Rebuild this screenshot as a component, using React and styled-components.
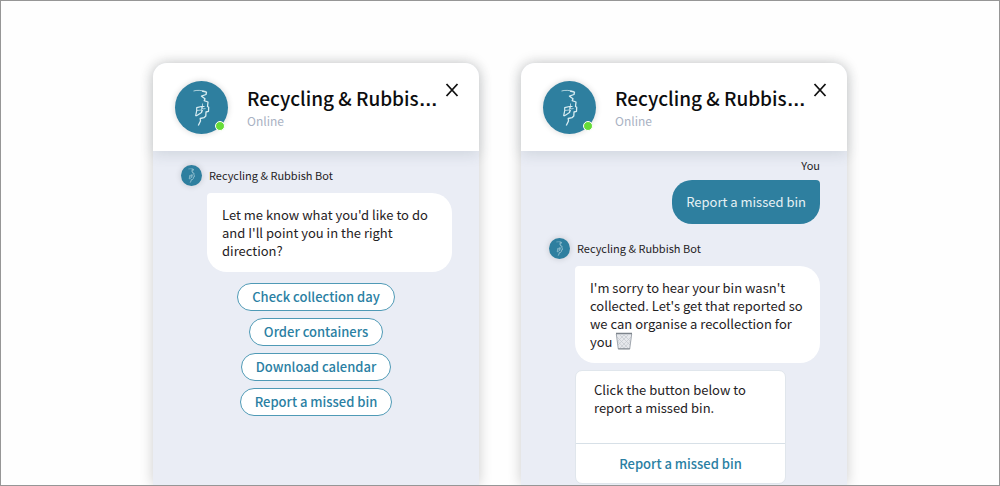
import React from "react";
import styled, { createGlobalStyle } from "styled-components";

const teal = "#2e7f9f";
const link = "#2a80a3";

const GlobalStyle = createGlobalStyle`
  *, *::before, *::after { box-sizing: border-box; }
  body {
    margin: 0;
    background: #fefefe;
    color: #1f2224;
    font-family: "Noto Sans CJK SC", "Noto Sans", sans-serif;
    font-size: 13px;
    line-height: 18px;
  }
  button { font: inherit; cursor: pointer; }
  p, h1 { margin: 0; }
`;

const Frame = styled.main`
  display: flex;
  justify-content: center;
  gap: 42px;
  height: 100vh;
  padding: 62px 24px 0;
  border: 1px solid #969696;
  overflow: hidden;
`;

const Widget = styled.section`
  display: flex;
  flex-direction: column;
  flex: 0 1 326px;
  min-width: 0;
  border-radius: 14px 14px 0 0;
  background: #eaedf5;
  box-shadow: 0 0 14px rgba(0, 0, 0, 0.2);
`;

const Header = styled.header`
  position: relative;
  display: flex;
  flex: none;
  align-items: center;
  gap: 19px;
  height: 88px;
  padding: 0 17px 0 22px;
  border-radius: 14px 14px 0 0;
  background: #fff;
  box-shadow: 0 4px 14px rgba(60, 75, 95, 0.14);
`;

const AvatarWrap = styled.div`
  position: relative;
  flex: none;
  width: ${(p) => p.$size}px;
  height: ${(p) => p.$size}px;
  border-radius: 50%;
  background: ${teal};
  box-shadow: 0 0 6px rgba(0, 0, 0, 0.16);

  svg { display: block; width: 100%; height: 100%; }
`;

const StatusDot = styled.span`
  position: absolute;
  right: 3px;
  bottom: 3px;
  width: 10px;
  height: 10px;
  border: 1px solid #fff;
  border-radius: 50%;
  background: #66dc38;
`;

const Heading = styled.div`
  flex: 1;
  min-width: 0;
`;

const Title = styled.h1`
  color: #0c0d0e;
  font-size: 19px;
  font-weight: 500;
  line-height: 26px;
  white-space: nowrap;
`;

const Ellipsis = styled.span`
  font-family: "Liberation Sans", sans-serif;
  font-weight: 700;
`;

const Presence = styled.p`
  color: #a9b2c3;
  font-size: 12px;
  line-height: 16px;
`;

const CloseButton = styled.button`
  display: flex;
  align-self: flex-start;
  margin-top: 18px;
  padding: 0;
  border: 0;
  background: none;
  color: #111;
`;

const Conversation = styled.div`
  display: flex;
  flex-direction: column;
  padding: ${(p) => (p.$compact ? 5 : 14)}px 27px 0;
`;

const Sender = styled.div`
  display: flex;
  align-items: flex-start;
  gap: 7px;
  margin: 0 0 7px 1px;
  font-size: 11px;
  line-height: 20px;
`;

const You = styled.p`
  margin-bottom: 6px;
  font-size: 11px;
  text-align: right;
`;

const Bubble = styled.p`
  margin-left: 27px;
  padding: 13px 15px 12px;
  border-radius: 4px 20px 20px 20px;
  background: #fff;
`;

const UserBubble = styled.p`
  align-self: flex-end;
  margin-bottom: 14px;
  padding: 13px 14px;
  border-radius: 20px 4px 20px 20px;
  background: ${teal};
  color: #e6f1f5;
`;

const Choices = styled.div`
  display: flex;
  flex-direction: column;
  align-items: center;
  gap: 7px;
  margin-top: 11px;
`;

const Choice = styled.button`
  height: 28px;
  padding: 0 14px;
  border: 1px solid #4f9ab6;
  border-radius: 14px;
  background: #fff;
  color: ${link};
  font-weight: 500;
  line-height: 18px;
`;

const ActionCard = styled.article`
  width: 211px;
  margin: 7px 0 0 27px;
  border: 1px solid #e0e6ec;
  border-radius: 7px;
  background: #fff;
`;

const ActionText = styled.p`
  min-height: 72px;
  padding: 10px 18px 0;
`;

const ActionButton = styled.button`
  display: block;
  width: 100%;
  height: 40px;
  padding: 0;
  border: 0;
  border-top: 1px solid #d7e0e7;
  background: none;
  color: ${link};
  font-weight: 500;
`;

const Bin = styled.svg`
  width: 18px;
  height: 18px;
  margin: -4px 0;
  vertical-align: 1px;
`;

function Avatar({ size, online }) {
  return (
    <AvatarWrap $size={size}>
      <svg viewBox="0 0 53 53" fill="none" stroke="#d9edf2" strokeLinejoin="round" aria-hidden="true">
        <path strokeWidth="1" opacity=".75" d="M18.500 10c3-1 8-.8 12.500.5" />
        <path strokeWidth="1.300" d="M27 10.200l4.500 1-.5 2.300-4.500 1.700 3.500 2.500-.8 2 3.800 1.300-.5 4.500 1.200.8-.2 4-2.500.7-.2 4-1.800 1.700-3.800.8.300 2.500-2.200 4.500" />
        <path strokeWidth="1.200" d="M29.500 25.500h-3l-4.800 1.200v3l-1 5h1.300M22 34.500l4.500-3 1-2.500" />
        <path strokeWidth=".9" opacity=".8" d="M22 29.500l4-.5M27.500 22.500v5.500l3-.5M26.500 26v5" />
      </svg>
      {online && <StatusDot />}
    </AvatarWrap>
  );
}

function WidgetHeader() {
  return (
    <Header>
      <Avatar size={53} online />
      <Heading>
        <Title>Recycling &amp; Rubbis<Ellipsis>…</Ellipsis></Title>
        <Presence>Online</Presence>
      </Heading>
      <CloseButton aria-label="Close chat">
        <svg width="20" height="18" viewBox="0 0 20 18" fill="none" stroke="currentColor" strokeWidth="1.8">
          <path d="M4.500 3l11 12M15.500 3l-11 12" />
        </svg>
      </CloseButton>
    </Header>
  );
}

function BotSender() {
  return (
    <Sender>
      <Avatar size={21} />
      <span>Recycling &amp; Rubbish Bot</span>
    </Sender>
  );
}

function Wastebasket() {
  return (
    <Bin viewBox="0 0 18 18" role="img" aria-label="wastebasket">
      <path d="M1.500 2h15l-1.900 15H3.400z" fill="#e6e8ec" />
      <path d="M2 5l11 11M2.500 9l7 7.500M5 3l10 10M9 3l6.500 6.500M16 5L5 16M15.500 9l-7 7.500M13 3L3 13M9 3L2.500 9.500" stroke="#c3c8ce" strokeWidth=".7" fill="none" />
      <path d="M1.300 2l2 15M16.700 2l-2 15" stroke="#a0a6ae" strokeWidth="1" />
      <path d="M1 1.500h16M3.200 16.800h11.600" stroke="#7d848c" strokeWidth="1.300" />
    </Bin>
  );
}

const choices = ["Check collection day", "Order containers", "Download calendar", "Report a missed bin"];

export default function App() {
  return (
    <>
      <GlobalStyle />
      <Frame>
        <Widget>
          <WidgetHeader />
          <Conversation>
            <BotSender />
            <Bubble>Let me know what you'd like to do and I'll point you in the right direction?</Bubble>
            <Choices>
              {choices.map((label) => (
                <Choice key={label}>{label}</Choice>
              ))}
            </Choices>
          </Conversation>
        </Widget>
        <Widget>
          <WidgetHeader />
          <Conversation $compact>
            <You>You</You>
            <UserBubble>Report a missed bin</UserBubble>
            <BotSender />
            <Bubble>
              I'm sorry to hear your bin wasn't collected. Let's get that reported so we can organise a recollection for you <Wastebasket />
            </Bubble>
            <ActionCard>
              <ActionText>Click the button below to report a missed bin.</ActionText>
              <ActionButton>Report a missed bin</ActionButton>
            </ActionCard>
          </Conversation>
        </Widget>
      </Frame>
    </>
  );
}
